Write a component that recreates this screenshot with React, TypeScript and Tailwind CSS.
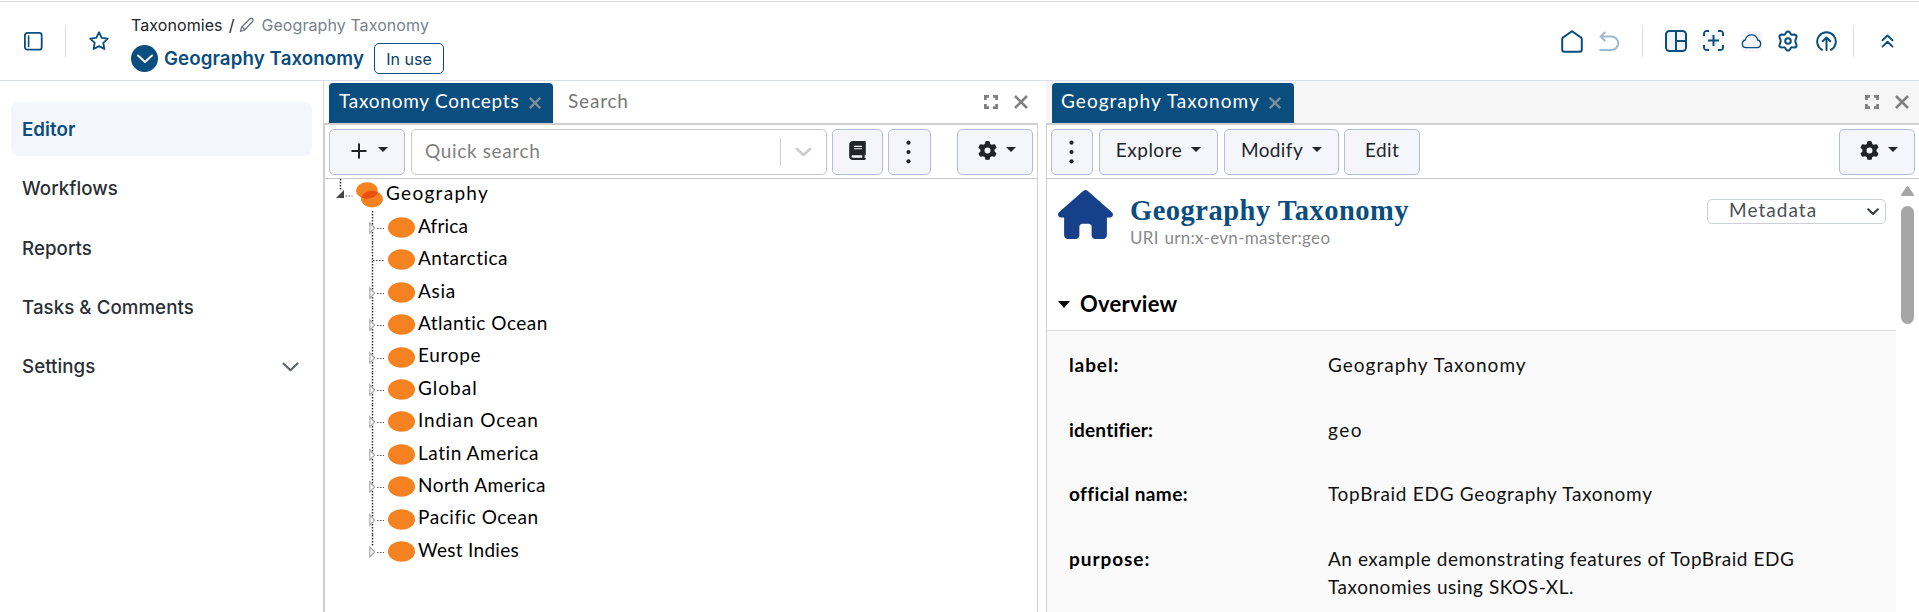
import { ReactNode } from "react";
import clsx from "clsx";
import { FaBook, FaGear, FaHouse } from "react-icons/fa6";

const navItems = ["Editor", "Workflows", "Reports", "Tasks & Comments", "Settings"];

const concepts = [
  { name: "Africa", tracking: "tracking-[0.15px]" },
  { name: "Antarctica", leaf: true, tracking: "tracking-[0.5px]" },
  { name: "Asia", tracking: "tracking-[0.7px]" },
  { name: "Atlantic Ocean", tracking: "tracking-[0.5px]" },
  { name: "Europe", tracking: "tracking-[0.7px]" },
  { name: "Global", tracking: "tracking-[1px]" },
  { name: "Indian Ocean", tracking: "tracking-[0.9px]" },
  { name: "Latin America", tracking: "tracking-[0.55px]" },
  { name: "North America", tracking: "tracking-[0.45px]" },
  { name: "Pacific Ocean", tracking: "tracking-[0.55px]" },
  { name: "West Indies", tracking: "tracking-[0.3px]" },
];

const properties = [
  { label: "label:", value: "Geography Taxonomy", labelTracking: "tracking-[0.9px]", tracking: "tracking-[1.03px]" },
  { label: "identifier:", value: "geo", labelTracking: "tracking-[0.2px]", tracking: "tracking-[1.5px]" },
  {
    label: "official name:",
    value: "TopBraid EDG Geography Taxonomy",
    labelTracking: "tracking-[0.4px]",
    tracking: "tracking-[0.71px]",
  },
  {
    label: "purpose:",
    value: "An example demonstrating features of TopBraid EDG Taxonomies using SKOS-XL.",
    labelTracking: "tracking-[0.95px]",
    tracking: "tracking-[0.54px]",
  },
];

interface IconProps {
  className?: string;
  width: number;
  height: number;
  strokeWidth?: number;
  children: ReactNode;
}

function LineIcon({ className, width, height, strokeWidth = 2, children }: IconProps) {
  return (
    <svg
      width={width}
      height={height}
      viewBox={`0 0 ${width} ${height}`}
      fill="none"
      stroke="currentColor"
      strokeWidth={strokeWidth}
      strokeLinecap="round"
      strokeLinejoin="round"
      className={clsx("shrink-0", className)}
    >
      {children}
    </svg>
  );
}

function Caret({ className }: { className?: string }) {
  return (
    <svg width="10" height="5" viewBox="0 0 10 5" className={clsx("shrink-0", className)}>
      <path d="M0 0h10L5 5z" fill="currentColor" />
    </svg>
  );
}

function Kebab() {
  return (
    <svg width="5" height="24" viewBox="0 0 5 24" fill="currentColor">
      <circle cx="2.5" cy="2.7" r="2.1" />
      <circle cx="2.5" cy="12" r="2.1" />
      <circle cx="2.5" cy="21.3" r="2.1" />
    </svg>
  );
}

function ToolButton({ className, children }: { className: string; children: ReactNode }) {
  return (
    <button
      className={clsx(
        "flex h-[46px] shrink-0 items-center justify-center rounded-[5px] border border-[#b3bddb] bg-[#f5f6fb] text-[#212529]",
        className,
      )}
    >
      {children}
    </button>
  );
}

function Tab({ className, children }: { className: string; children: ReactNode }) {
  return (
    <div
      className={clsx(
        "flex h-10 shrink-0 items-center rounded-t-[4px] bg-[#0a4d7f] pb-[3px] text-white",
        className,
      )}
    >
      <span>{children}</span>
      <LineIcon width={12} height={12} className="mt-[3px] text-[#808b93]" strokeWidth={2.4}>
        <path d="M.8.8l10.4 10.4M11.2.8L.8 11.2" strokeLinecap="butt" />
      </LineIcon>
    </div>
  );
}

function WindowControls() {
  return (
    <div className="mr-[10px] ml-auto flex h-10 items-center gap-4 pb-[2px] text-[#808080]">
      <LineIcon width={14} height={14} strokeWidth={2.8}>
        <path
          d="M1.400 5V1.400H5M9 1.400h3.600V5M12.600 9v3.600H9M5 12.600H1.400V9"
          strokeLinecap="butt"
          strokeLinejoin="miter"
        />
      </LineIcon>
      <LineIcon width={14} height={14} strokeWidth={2.6}>
        <path d="M1 1l12 12M13 1L1 13" strokeLinecap="butt" />
      </LineIcon>
    </div>
  );
}

function Header() {
  return (
    <header className="flex h-20 shrink-0 items-center border-y border-t-[#dedede] border-b-[#d9dde6] text-[#0a4d7f]">
      <LineIcon width={19} height={19} className="ml-[24px]" strokeWidth={1.8}>
        <rect x="0.9" y="0.9" width="16.8" height="16.8" rx="2.5" />
        <path d="M4.6 4v10.6" strokeWidth={1.6} />
      </LineIcon>
      <div className="ml-[22px] h-8 w-px bg-[#d9dde6]" />
      <LineIcon width={20} height={20} className="ml-[23px]" strokeWidth={1.8}>
        <path d="M10 1.2l2.7 5.6 6.1.8-4.5 4.2 1.1 6.2L10 15.1 4.6 18l1.1-6.2L1.2 7.6l6.1-.8z" />
      </LineIcon>
      <div className="ml-[22px] flex flex-col gap-[6px] self-start pt-[11px]">
        <div className="flex h-6 items-center text-base text-[#212529]">
          <span className="tracking-[0.08px]">Taxonomies</span>
          <span className="ml-[6px]">/</span>
          <LineIcon width={16} height={16} className="ml-[5px] text-[#6c757d]" strokeWidth={1.3}>
            <path d="M1.5 14.5l1-4.3L11 1.7a1.7 1.7 0 0 1 2.6.1c.8.8.8 1.8.1 2.5L5.6 13zM2.6 10.2c1.6.3 2.6 1.2 3 2.8" />
          </LineIcon>
          <span className="ml-[6px] tracking-[0.08px] text-[#78828c]">Geography Taxonomy</span>
        </div>
        <div className="flex h-[31px] items-center">
          <span className="flex h-[27px] w-[27px] items-center justify-center rounded-full bg-[#0a4d7f] text-white">
            <LineIcon width={16} height={10}>
              <path d="M1 1.5L8 8l7-6.5" />
            </LineIcon>
          </span>
          <span className="ml-[6px] pt-px text-[18.7px] font-semibold tracking-[0.1px]">Geography Taxonomy</span>
          <span className="ml-[10px] flex h-[31px] w-[70px] items-center justify-center rounded-[5px] border border-[#0a4d7f] text-base text-[#0a3f6b]">
            In use
          </span>
        </div>
      </div>

      <LineIcon width={22} height={23} className="ml-auto">
        <path d="M1.2 9.5Q1.2 8.2 2.2 7.4L11 1.2l8.8 6.2q1 .8 1 2.1V19.8q0 2-2 2H3.2q-2 0-2-2z" />
      </LineIcon>
      <LineIcon width={20} height={21} className="ml-[16px] text-[#9dbad0]">
        <path d="M5.8 1.5L1.5 5.6l4.3 4M1.5 5.6H12.5a6.7 6.7 0 0 1 0 13.4H1.2" />
      </LineIcon>
      <div className="ml-[23px] h-8 w-px bg-[#d9dde6]" />
      <LineIcon width={22} height={22} className="ml-[22px]">
        <rect x="1" y="1" width="20" height="20" rx="3.5" fill="#f0f4fa" />
        <path d="M11 1v20M11 11h10" />
      </LineIcon>
      <LineIcon width={21} height={21} className="mb-px ml-[16px] rounded bg-[#f5f7fb]">
        <path
          d="M1 6V3q0-2 2-2h3M15 1h3q2 0 2 2v3M20 15v3q0 2-2 2h-3M6 20H3q-2 0-2-2v-3M10.5 5v11M5 10.5h11"
          strokeLinecap="butt"
        />
      </LineIcon>
      <LineIcon width={21} height={21} className="ml-[17px] rounded bg-[#f5f6fb]" strokeWidth={1.3}>
        <path d="M5 16.7a3.9 3.9 0 0 1-.6-7.7 6.2 6.2 0 0 1 12.2 0 3.9 3.9 0 0 1-.6 7.7z" />
      </LineIcon>
      <LineIcon width={22} height={22} className="ml-[15px]">
        <path d="M9.3 2.3q1.7-1.8 3.400 0l1.2 2q.5.5 1.2.4l2.5-.2q2.3.4 1.9 2.700l-1 2.7q-.4 1.1 0 2.200l1 2.7q.4 2.3-1.9 2.700l-2.5-.2q-.7-.1-1.2.4l-1.2 2q-1.7 1.8-3.400 0l-1.2-2q-.5-.5-1.2-.4l-2.5.2Q2.1 17.1 2.5 14.8l1-2.7q.4-1.1 0-2.200l-1-2.7Q2.1 4.9 4.4 4.5l2.5.2q.7.1 1.2-.4z" />
        <circle cx="11" cy="11" r="2.8" />
      </LineIcon>
      <LineIcon width={21} height={21} className="ml-[17px]">
        <path d="M6 18.8a9.3 9.3 0 1 1 9 0M10.5 19V6.5M6.7 10.3l3.8-3.8 3.8 3.8" />
      </LineIcon>
      <div className="ml-[16px] h-8 w-px bg-[#d9dde6]" />
      <LineIcon width={13} height={14} className="mr-[25px] ml-[27px]" strokeWidth={1.9}>
        <path d="M1.5 6.3l5-4.8 5 4.8M1.5 12.6l5-4.8 5 4.8" />
      </LineIcon>
    </header>
  );
}

function Sidebar() {
  return (
    <nav className="flex w-[323px] shrink-0 flex-col gap-[5.3px] px-[11px] pt-[21px] text-[18.7px]">
      {navItems.map((item, i) => (
        <a
          key={item}
          className={clsx(
            "flex h-[54px] w-[301px] items-center justify-between rounded-lg pt-[2px] pr-[13px] pl-[11px] tracking-[0.06px]",
            i === 0 ? "bg-[#f3f7fb] font-semibold text-[#0a4d7f]" : "font-medium text-[#2a2f35]",
          )}
        >
          {item}
          {item === "Settings" && (
            <LineIcon width={17} height={10} className="text-[#5a626b]">
              <path d="M1.5 1.5l7 6.8 7-6.8" />
            </LineIcon>
          )}
        </a>
      ))}
    </nav>
  );
}

interface TreeRowProps {
  name: string;
  tracking: string;
  leaf?: boolean;
  last: boolean;
}

function TreeRow({ name, tracking, leaf, last }: TreeRowProps) {
  return (
    <li className="flex h-[32.4px] items-center pl-[44px]">
      <svg width="19" height="33" viewBox="0 0 19 33" className="shrink-0 overflow-visible" fill="none">
        <path d={last ? "M3.5 0v12" : "M3.5 0v33"} stroke="#333" strokeWidth="1.5" strokeDasharray="1.5 1.5" />
        <path d={leaf ? "M4 17.5h11" : "M8 17.5h7"} stroke="#444" strokeDasharray="1.5 1.5" />
        {!leaf && <path d="M.8 11.8v10.4L5.6 17z" fill="#fff" stroke="#aaa" strokeWidth="1.2" />}
      </svg>
      <svg width="27" height="21" viewBox="0 0 27 21" className="shrink-0">
        <ellipse cx="13.5" cy="10.5" rx="13.5" ry="10.2" fill="#f58220" />
      </svg>
      <span className={clsx("ml-[3px] pb-[3px]", tracking)}>{name}</span>
    </li>
  );
}

function ConceptsPanel() {
  return (
    <section className="flex w-[715px] shrink-0 flex-col">
      <div className="flex h-[42px] shrink-0 border-l border-[#d5d8dc] pt-[2px] pl-[5px]">
        <Tab className="w-[224px] justify-between pr-[12px] pl-[10px] tracking-[0.75px]">Taxonomy Concepts</Tab>
        <span className="flex h-10 items-center pb-[3px] pl-[15px] tracking-[0.8px] text-[#777]">Search</span>
        <WindowControls />
      </div>
      <div className="flex min-h-0 flex-1 flex-col border-x border-t-2 border-l-2 border-[#cfcfcf]">
        <div className="flex h-[54px] shrink-0 items-start border-b border-[#c8c8c8] pt-[4px] pl-[4px]">
          <ToolButton className="w-[76px] gap-[11px] pl-[4px]">
            <LineIcon width={16} height={16} className="mb-[3px]">
              <path d="M8 .5v15M.5 8h15" strokeLinecap="butt" />
            </LineIcon>
            <Caret className="mb-[5px]" />
          </ToolButton>
          <div className="ml-[6px] flex h-[46px] w-[416px] items-center rounded-[5px] border border-[#c8c8c8] pl-[13px] text-[#808080]">
            <span className="pb-[2px] tracking-[0.65px]">Quick search</span>
            <div className="ml-auto h-7 w-px bg-[#ccc]" />
            <LineIcon width={17} height={10} className="mr-[14px] ml-[14px] text-[#ccc]" strokeWidth={2.6}>
              <path d="M1.8 1.8l6.7 6.2 6.7-6.2" />
            </LineIcon>
          </div>
          <ToolButton className="ml-[5px] w-[51px]">
            <FaBook size={19} className="mb-[4px]" />
          </ToolButton>
          <ToolButton className="ml-[5px] w-[43px] pr-[3px]">
            <Kebab />
          </ToolButton>
          <ToolButton className="ml-[26px] w-[76px] gap-[9px] pb-[3px] pl-[4px]">
            <FaGear size={19} />
            <Caret className="mb-[2px]" />
          </ToolButton>
        </div>
        <ul className="text-black">
          <li className="flex h-[32.4px] items-center pl-[11px]">
            <svg width="20" height="33" viewBox="0 0 20 33" className="shrink-0" fill="none">
              <path d="M4.5 0v11" stroke="#333" strokeWidth="1.5" strokeDasharray="1.5 1.5" />
              <path d="M8 11v8H0z" fill="#444" />
              <path d="M9.5 17h7" stroke="#444" strokeDasharray="1.5 1.5" />
            </svg>
            <svg width="27" height="26" viewBox="0 0 27 26" className="shrink-0">
              <defs>
                <clipPath id="root-overlap">
                  <ellipse cx="11" cy="8.5" rx="11" ry="8.3" />
                </clipPath>
              </defs>
              <ellipse cx="11" cy="8.5" rx="11" ry="8.3" fill="#f58220" />
              <ellipse cx="16" cy="17.2" rx="11" ry="8.3" fill="#f58220" />
              <ellipse cx="16" cy="17.2" rx="11" ry="8.3" fill="#e84e0f" clipPath="url(#root-overlap)" />
            </svg>
            <span className="ml-[3px] pb-[3px] tracking-[1.3px]">Geography</span>
          </li>
          {concepts.map((concept, i) => (
            <TreeRow key={concept.name} {...concept} last={i === concepts.length - 1} />
          ))}
        </ul>
      </div>
    </section>
  );
}

function DetailsPanel() {
  return (
    <section className="ml-[8px] flex min-w-0 flex-1 flex-col">
      <div className="flex h-[42px] shrink-0 bg-[#f6f6f6] pt-[2px] pl-[6px]">
        <Tab className="w-[242px] justify-between pr-[13px] pl-[9px] tracking-[1.04px]">Geography Taxonomy</Tab>
        <WindowControls />
      </div>
      <div className="flex min-h-0 flex-1 flex-col border-t-2 border-l border-[#cfcfcf]">
        <div className="flex h-[54px] shrink-0 items-start border-b border-[#c8c8c8] pt-[4px] pl-[4px]">
          <ToolButton className="w-[42px] pr-[2px]">
            <Kebab />
          </ToolButton>
          <ToolButton className="ml-[6px] w-[119px] gap-[9px] pb-[3px] tracking-[0.5px]">
            Explore <Caret className="mb-[2px]" />
          </ToolButton>
          <ToolButton className="ml-[6px] w-[115px] gap-[9px] pb-[3px]">
            Modify <Caret className="mb-[2px]" />
          </ToolButton>
          <ToolButton className="ml-[5px] w-[76px] pb-[3px]">Edit</ToolButton>
          <ToolButton className="mr-[4px] ml-auto w-[76px] gap-[9px] pb-[3px] pl-[4px]">
            <FaGear size={19} />
            <Caret className="mb-[2px]" />
          </ToolButton>
        </div>
        <div className="flex min-h-0 flex-1">
          <div className="flex min-w-0 flex-1 flex-col">
            <div className="flex h-[101px] shrink-0 pt-[11px] pl-[11px]">
              <FaHouse className="h-[49px] w-[55px] text-[#17408b]" />
              <div className="ml-[17px] pt-[4px]">
                <h1 className="font-['Liberation_Serif',serif] text-[28.5px] leading-[34px] font-bold tracking-[0.5px] text-[#0a4d7f]">
                  Geography Taxonomy
                </h1>
                <p className="text-[17px] leading-[20px] tracking-[0.3px] text-[#8a8a8a]">
                  URI <span className="ml-px">urn:x-evn-master:geo</span>
                </p>
              </div>
              <div className="mt-[9px] mr-[10px] ml-auto flex h-[25px] w-[179px] items-center justify-between rounded-[5px] border border-[#ccd0d8] pr-[6px] pl-[21px] text-[#495057]">
                <span className="pb-[3px] tracking-[1.05px]">Metadata</span>
                <LineIcon width={12} height={8} className="text-[#343a40]">
                  <path d="M1.2 1.2L6 6l4.8-4.8" />
                </LineIcon>
              </div>
            </div>
            <div className="flex h-[51px] shrink-0 items-center border-b border-[#dcdcdc] pl-[11px] text-black">
              <svg width="12" height="7" viewBox="0 0 12 7" className="mb-px">
                <path d="M0 0h12L6 7z" fill="currentColor" />
              </svg>
              <h2 className="ml-[10px] pb-[3px] text-[22px] font-bold tracking-[0.25px]">Overview</h2>
            </div>
            <dl className="flex flex-1 flex-col gap-[36.7px] bg-[#fafafa] pt-[20px] pl-[22px] text-[#111]">
              {properties.map(({ label, value, labelTracking, tracking }) => (
                <div key={label} className="flex leading-[28px]">
                  <dt className={clsx("w-[259px] shrink-0 font-bold text-black", labelTracking)}>{label}</dt>
                  <dd className={clsx("w-[500px]", tracking)}>{value}</dd>
                </div>
              ))}
            </dl>
          </div>
          <div className="flex w-[23px] flex-col items-center pt-[6px]">
            <svg width="15" height="12" viewBox="0 0 15 12">
              <path d="M7.5 2L13 10H2z" fill="#a6a6a6" stroke="#a6a6a6" strokeWidth="2" strokeLinejoin="round" />
            </svg>
            <div className="mt-[9px] h-[118px] w-[13px] rounded-full bg-[#a6a6a6]" />
          </div>
        </div>
      </div>
    </section>
  );
}

export default function App() {
  return (
    <div className="flex h-[612px] w-full flex-col overflow-hidden bg-white pt-px font-[Inter,sans-serif]">
      <Header />
      <main className="flex min-h-0 flex-1">
        <Sidebar />
        <div className="flex min-w-0 flex-1 font-[Lato,sans-serif] text-[19px] tracking-[0.4px]">
          <ConceptsPanel />
          <DetailsPanel />
        </div>
      </main>
    </div>
  );
}
